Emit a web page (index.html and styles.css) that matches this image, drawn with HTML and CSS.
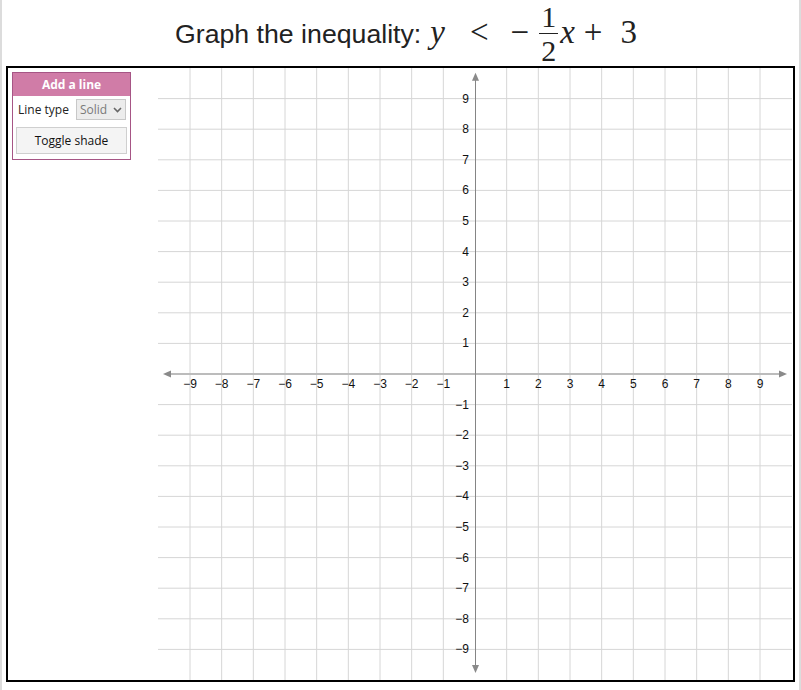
FILE: index.html
```html
<!DOCTYPE html>
<html>
<head>
<meta charset="utf-8">
<link rel="stylesheet" href="styles.css">
</head>
<body>
<div class="page">
  <h1 class="title">
    <span class="t-text">Graph the inequality:</span>
    <span class="math"><i class="v">y</i><span class="rel">&lt;</span><span class="op">−</span><span class="frac"><span class="num">1</span><span class="den">2</span></span><i class="v vx">x</i><span class="bin">+</span><span class="n3">3</span></span>
  </h1>
  <div class="board">
    <div class="side">
      <div class="panel">
        <div class="panel-head">Add a line</div>
        <div class="panel-row">
          <span class="lbl">Line type</span>
          <span class="select">Solid<svg class="chev" width="9" height="6" viewBox="0 0 9 6"><path d="M1 1 L4.5 4.5 L8 1" fill="none" stroke="#666" stroke-width="1.6"/></svg></span>
        </div>
        <div class="btn">Toggle shade</div>
      </div>
    </div>
    <svg class="graph" width="634" height="612" viewBox="0 0 634 612">
      <g class="grid">
        <line x1="32" y1="0" x2="32" y2="612"/>
        <line x1="63.67" y1="0" x2="63.67" y2="612"/>
        <line x1="95.33" y1="0" x2="95.33" y2="612"/>
        <line x1="127" y1="0" x2="127" y2="612"/>
        <line x1="158.67" y1="0" x2="158.67" y2="612"/>
        <line x1="190.33" y1="0" x2="190.33" y2="612"/>
        <line x1="222" y1="0" x2="222" y2="612"/>
        <line x1="253.67" y1="0" x2="253.67" y2="612"/>
        <line x1="285.33" y1="0" x2="285.33" y2="612"/>
        <line x1="348.67" y1="0" x2="348.67" y2="612"/>
        <line x1="380.33" y1="0" x2="380.33" y2="612"/>
        <line x1="412" y1="0" x2="412" y2="612"/>
        <line x1="443.67" y1="0" x2="443.67" y2="612"/>
        <line x1="475.33" y1="0" x2="475.33" y2="612"/>
        <line x1="507" y1="0" x2="507" y2="612"/>
        <line x1="538.67" y1="0" x2="538.67" y2="612"/>
        <line x1="570.33" y1="0" x2="570.33" y2="612"/>
        <line x1="602" y1="0" x2="602" y2="612"/>
        <line x1="0" y1="30.6" x2="634" y2="30.6"/>
        <line x1="0" y1="61.2" x2="634" y2="61.2"/>
        <line x1="0" y1="91.8" x2="634" y2="91.8"/>
        <line x1="0" y1="122.4" x2="634" y2="122.4"/>
        <line x1="0" y1="153" x2="634" y2="153"/>
        <line x1="0" y1="183.6" x2="634" y2="183.6"/>
        <line x1="0" y1="214.2" x2="634" y2="214.2"/>
        <line x1="0" y1="244.8" x2="634" y2="244.8"/>
        <line x1="0" y1="275.4" x2="634" y2="275.4"/>
        <line x1="0" y1="336.6" x2="634" y2="336.6"/>
        <line x1="0" y1="367.2" x2="634" y2="367.2"/>
        <line x1="0" y1="397.8" x2="634" y2="397.8"/>
        <line x1="0" y1="428.4" x2="634" y2="428.4"/>
        <line x1="0" y1="459" x2="634" y2="459"/>
        <line x1="0" y1="489.6" x2="634" y2="489.6"/>
        <line x1="0" y1="520.2" x2="634" y2="520.2"/>
        <line x1="0" y1="550.8" x2="634" y2="550.8"/>
        <line x1="0" y1="581.4" x2="634" y2="581.4"/>
      </g>
      <line class="xaxis" x1="10" y1="306" x2="624" y2="306"/>
      <polygon class="arrow" points="5,306 13,302.5 13,309.5"/>
      <polygon class="arrow" points="629,306 621,302.5 621,309.5"/>
      <line class="yaxis" x1="317.5" y1="10" x2="317.5" y2="600"/>
      <polygon class="arrow" points="317.5,4.7 314,12.7 321,12.7"/>
      <polygon class="arrow" points="317.5,605 314,597 321,597"/>
      <g class="xlabels">
        <text x="32" y="319.5">−9</text>
        <text x="63.67" y="319.5">−8</text>
        <text x="95.33" y="319.5">−7</text>
        <text x="127" y="319.5">−6</text>
        <text x="158.67" y="319.5">−5</text>
        <text x="190.33" y="319.5">−4</text>
        <text x="222" y="319.5">−3</text>
        <text x="253.67" y="319.5">−2</text>
        <text x="285.33" y="319.5">−1</text>
        <text x="348.67" y="319.5">1</text>
        <text x="380.33" y="319.5">2</text>
        <text x="412" y="319.5">3</text>
        <text x="443.67" y="319.5">4</text>
        <text x="475.33" y="319.5">5</text>
        <text x="507" y="319.5">6</text>
        <text x="538.67" y="319.5">7</text>
        <text x="570.33" y="319.5">8</text>
        <text x="602" y="319.5">9</text>
      </g>
      <g class="ylabels">
        <text x="311" y="34.6">9</text>
        <text x="311" y="65.2">8</text>
        <text x="311" y="95.8">7</text>
        <text x="311" y="126.4">6</text>
        <text x="311" y="157">5</text>
        <text x="311" y="187.6">4</text>
        <text x="311" y="218.2">3</text>
        <text x="311" y="248.8">2</text>
        <text x="311" y="279.4">1</text>
        <text x="311" y="340.6">−1</text>
        <text x="311" y="371.2">−2</text>
        <text x="311" y="401.8">−3</text>
        <text x="311" y="432.4">−4</text>
        <text x="311" y="463">−5</text>
        <text x="311" y="493.6">−6</text>
        <text x="311" y="524.2">−7</text>
        <text x="311" y="554.8">−8</text>
        <text x="311" y="585.4">−9</text>
      </g>
    </svg>
  </div>
</div>
</body>
</html>
```

FILE: styles.css
```css
html, body {
  margin: 0;
  padding: 0;
  background: #fff;
}

.page {
  width: 797px;
  height: 690px;
  border-left: 2px solid #dcdcdc;
  border-right: 2px solid #dcdcdc;
  box-sizing: content-box;
  overflow: hidden;
}

.title {
  margin: 0;
  height: 66px;
  box-sizing: border-box;
  display: flex;
  align-items: baseline;
  justify-content: center;
  padding-left: 11px;
  font: normal 26.7px "Liberation Sans", Arial, sans-serif;
  color: #222;
  white-space: nowrap;
}

.t-text {
  line-height: 1;
}

.math {
  font-family: "Liberation Serif", "Times New Roman", serif;
  font-size: 33px;
  line-height: 1;
  margin-left: 9px;
}

.math .v {
  font-style: italic;
}

.rel {
  margin: 0 22px 0 25px;
}

.op {
  margin: 0 10px 0 0;
}

.frac {
  display: inline-block;
  vertical-align: -18px;
  text-align: center;
  font-size: 30px;
  margin-right: 2px;
}

.num {
  display: block;
  line-height: 33px;
  padding: 0 2px;
}

.den {
  display: block;
  line-height: 33px;
  border-top: 1px solid #222;
  padding: 0 2px;
}

.bin {
  margin: 0 18px 0 9px;
}

.board {
  margin: 0 4px;
  width: 785px;
  height: 612px;
  border: 2px solid #000;
  display: grid;
  grid-template-columns: 150px 634px;
  align-items: start;
}

.side {
  padding: 4px 0 0 4px;
}

.panel {
  width: 117px;
  border: 1px solid #a65585;
  font: 12px "Open Sans", "Noto Sans", sans-serif;
  color: #222;
  padding-bottom: 5px;
}

.panel-head {
  background: #d07ca7;
  color: #fff;
  font-weight: bold;
  text-align: center;
  height: 23px;
  line-height: 23px;
}

.panel-row {
  display: flex;
  align-items: center;
  padding: 3px 0 0 5px;
  height: 21px;
}

.lbl {
  margin-right: 7px;
}

.select {
  display: inline-flex;
  align-items: center;
  justify-content: space-between;
  box-sizing: border-box;
  width: 50px;
  height: 21px;
  padding: 0 3px 0 3px;
  background: #ececec;
  border: 1px solid #c8c8c8;
  color: #7a7a7a;
}

.chev {
  display: block;
}

.btn {
  margin: 7px 0 0 3px;
  box-sizing: border-box;
  width: 111px;
  height: 27px;
  line-height: 25px;
  text-align: center;
  background: #f4f4f4;
  border: 1px solid #cfcfcf;
  color: #111;
}

.graph {
  display: block;
}

.grid line {
  stroke: #d6d6d6;
  stroke-width: 1;
}

.xaxis {
  stroke: #bcbcbc;
  stroke-width: 2;
}

.yaxis {
  stroke: #858585;
  stroke-width: 1;
}

.arrow {
  fill: #8a8a8a;
}

.xlabels text,
.ylabels text {
  font: 12px "Liberation Sans", Arial, sans-serif;
  fill: #111;
}

.xlabels text {
  text-anchor: middle;
}

.ylabels text {
  text-anchor: end;
}
```
